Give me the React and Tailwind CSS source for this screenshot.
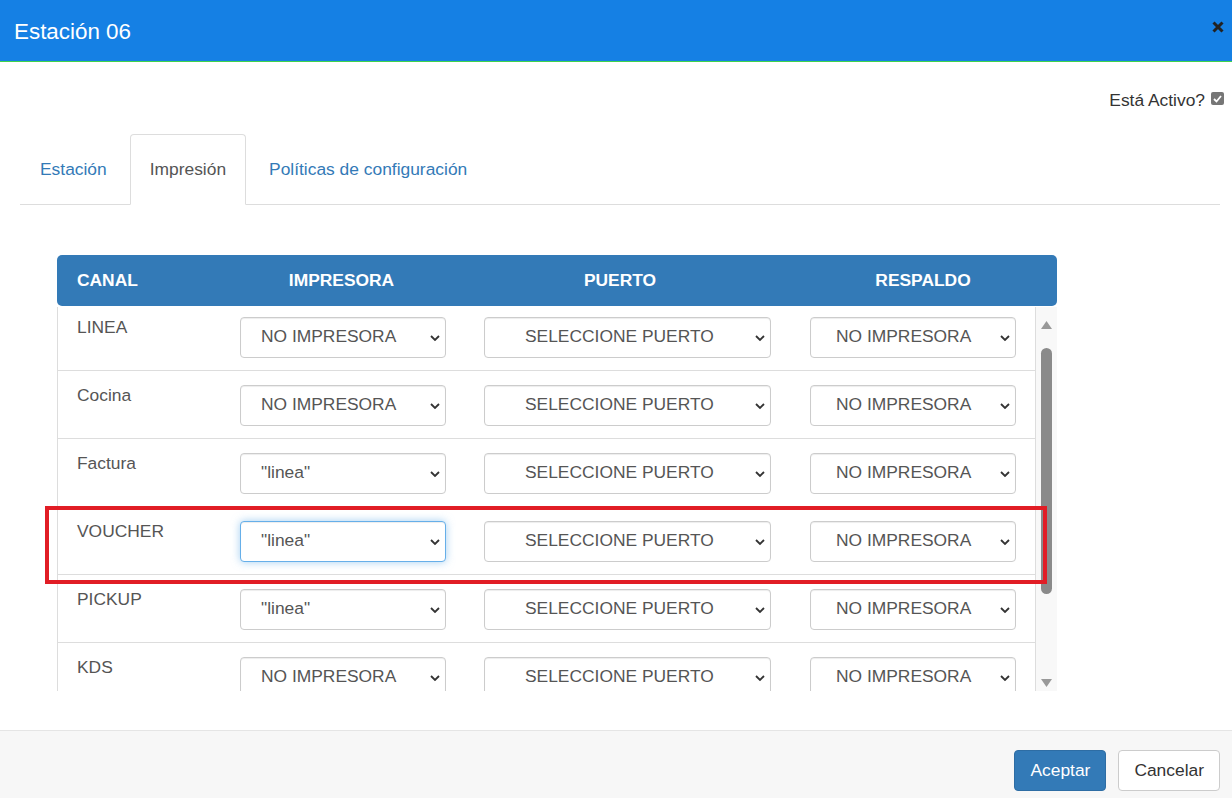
import { useState } from 'react'

const rows = [
  { canal: 'LINEA', imp: 'NO IMPRESORA', res: 'NO IMPRESORA' },
  { canal: 'Cocina', imp: 'NO IMPRESORA', res: 'NO IMPRESORA' },
  { canal: 'Factura', imp: '"linea"', res: 'NO IMPRESORA' },
  { canal: 'VOUCHER', imp: '"linea"', res: 'NO IMPRESORA', focus: true },
  { canal: 'PICKUP', imp: '"linea"', res: 'NO IMPRESORA' },
  { canal: 'KDS', imp: 'NO IMPRESORA', res: 'NO IMPRESORA' },
]

const options = ['NO IMPRESORA', '"linea"', 'SELECCIONE PUERTO', 'COM1', 'COM2']

function Select({ value, width, pad, focus }) {
  return (
    <div className={`relative ${width}`}>
      <select
        defaultValue={value}
        className={`w-full h-[41px] appearance-none bg-white rounded-[4px] border text-[17.4px] text-[#555] leading-[22px] pb-[4px] outline-none ${pad} ${
          focus
            ? 'border-[#66afe9] shadow-[inset_0_1px_1px_rgba(0,0,0,0.075),0_0_8px_rgba(102,175,233,0.6)]'
            : 'border-[#ccc] shadow-[inset_0_1px_1px_rgba(0,0,0,0.075)]'
        }`}
      >
        {options.map((o) => (
          <option key={o} value={o}>
            {o}
          </option>
        ))}
      </select>
      <svg
        className="absolute right-[6px] top-1/2 -translate-y-1/2 pointer-events-none"
        width="10"
        height="7"
        viewBox="0 0 10 7"
      >
        <polyline points="1,1.5 5,5.5 9,1.5" fill="none" stroke="#333" strokeWidth="1.8" />
      </svg>
    </div>
  )
}

export default function App() {
  const [tab, setTab] = useState('Impresión')
  const tabs = ['Estación', 'Impresión', 'Políticas de configuración']

  return (
    <div className="w-[1232px] h-[798px] flex flex-col bg-white font-['Liberation_Sans',Arial,sans-serif] overflow-hidden">
      {/* header */}
      <div className="h-[62px] shrink-0 bg-[#1580e4] border-b border-[#3fd34c] flex items-center justify-between pl-[14px] pr-[8px]">
        <h1 className="text-[22.4px] text-white leading-none mt-[3px]">Estación 06</h1>
        <svg width="12" height="12" viewBox="0 0 12 12" className="mb-[8px]">
          <path d="M1.5 1.5 L10.5 10.5 M10.5 1.5 L1.5 10.5" stroke="#222" strokeWidth="3" />
        </svg>
      </div>

      {/* body */}
      <div className="flex-1 px-[20px]">
        <div className="flex justify-end items-center gap-[6px] mt-[26px] mr-[-12px] h-[25px]">
          <span className="text-[17.4px] text-[#333]">Está Activo?</span>
          <span className="w-[13px] h-[13px] rounded-[2px] bg-[#767676] flex items-center justify-center mb-[4px]">
            <svg width="9" height="8" viewBox="0 0 9 8">
              <polyline points="1,4 3.5,6.5 8,1" fill="none" stroke="#fff" strokeWidth="1.8" />
            </svg>
          </span>
        </div>

        {/* tabs */}
        <div className="mt-[21px] mr-[-8px] flex border-b border-[#ddd] h-[71px]">
          {tabs.map((t) => (
            <button
              key={t}
              onClick={() => setTab(t)}
              className={`mr-[3px] px-[19px] h-[71px] -mb-px text-[17.4px] rounded-t-[4px] border ${
                tab === t
                  ? 'text-[#555] bg-white border-[#ddd] border-b-white'
                  : 'text-[#337ab7] border-transparent'
              }`}
            >
              {t}
            </button>
          ))}
        </div>

        {/* table */}
        <div className="relative ml-[37px] mt-[50px] w-[1000px]">
          <div className="h-[51px] bg-[#337ab7] rounded-[5px] grid grid-cols-[183px_203px_354px_252px_1fr] items-center text-white font-bold text-[17.4px]">
            <div className="pl-[20px]">CANAL</div>
            <div className="text-center">IMPRESORA</div>
            <div className="text-center">PUERTO</div>
            <div className="text-center">RESPALDO</div>
            <div />
          </div>

          <div className="mt-px h-[384px] flex overflow-hidden">
            <div className="w-[979px] border-l border-r border-[#ddd] overflow-hidden">
              <div className="-mt-[4px]">
                {rows.map((r) => (
                  <div key={r.canal} className="h-[68px] border-b border-[#ddd] flex items-start">
                    <div className="w-[182px] pl-[19px] pt-[12px] text-[17.4px] text-[#555] leading-[25px]">
                      {r.canal}
                    </div>
                    <div className="flex items-start pt-[14px]">
                      <Select value={r.imp} width="w-[206px]" pad="pl-[20px]" focus={r.focus} />
                      <div className="w-[38px]" />
                      <Select value="SELECCIONE PUERTO" width="w-[287px]" pad="pl-[40px]" />
                      <div className="w-[39px]" />
                      <Select value={r.res} width="w-[206px]" pad="pl-[25px]" />
                    </div>
                  </div>
                ))}
              </div>
            </div>
            {/* scrollbar */}
            <div className="w-[21px] bg-[#f8f8f8] flex flex-col items-center pt-[14px] pb-[4px]">
              <svg width="11" height="8" viewBox="0 0 11 8">
                <polygon points="5.5,0 11,8 0,8" fill="#999" />
              </svg>
              <div className="w-[11px] h-[246px] mt-[19px] rounded-full bg-[#8a8a8a]" />
              <div className="flex-1" />
              <svg width="11" height="8" viewBox="0 0 11 8">
                <polygon points="0,0 11,0 5.5,8" fill="#999" />
              </svg>
            </div>
          </div>

          {/* highlight */}
          <div className="absolute left-[-12px] top-[251px] w-[1002px] h-[78px] border-[4px] border-[#e11d25] pointer-events-none" />
        </div>
      </div>

      {/* footer */}
      <div className="h-[68px] shrink-0 bg-[#f7f7f7] border-t border-[#e5e5e5] flex justify-end items-start pt-[19px] pr-[12px] gap-[12px]">
        <button className="h-[41px] px-[15px] rounded-[4px] bg-[#337ab7] border border-[#2e6da4] text-white text-[17.4px]">
          Aceptar
        </button>
        <button className="h-[41px] px-[15px] rounded-[4px] bg-white border border-[#ccc] text-[#333] text-[17.4px]">
          Cancelar
        </button>
      </div>
    </div>
  )
}
